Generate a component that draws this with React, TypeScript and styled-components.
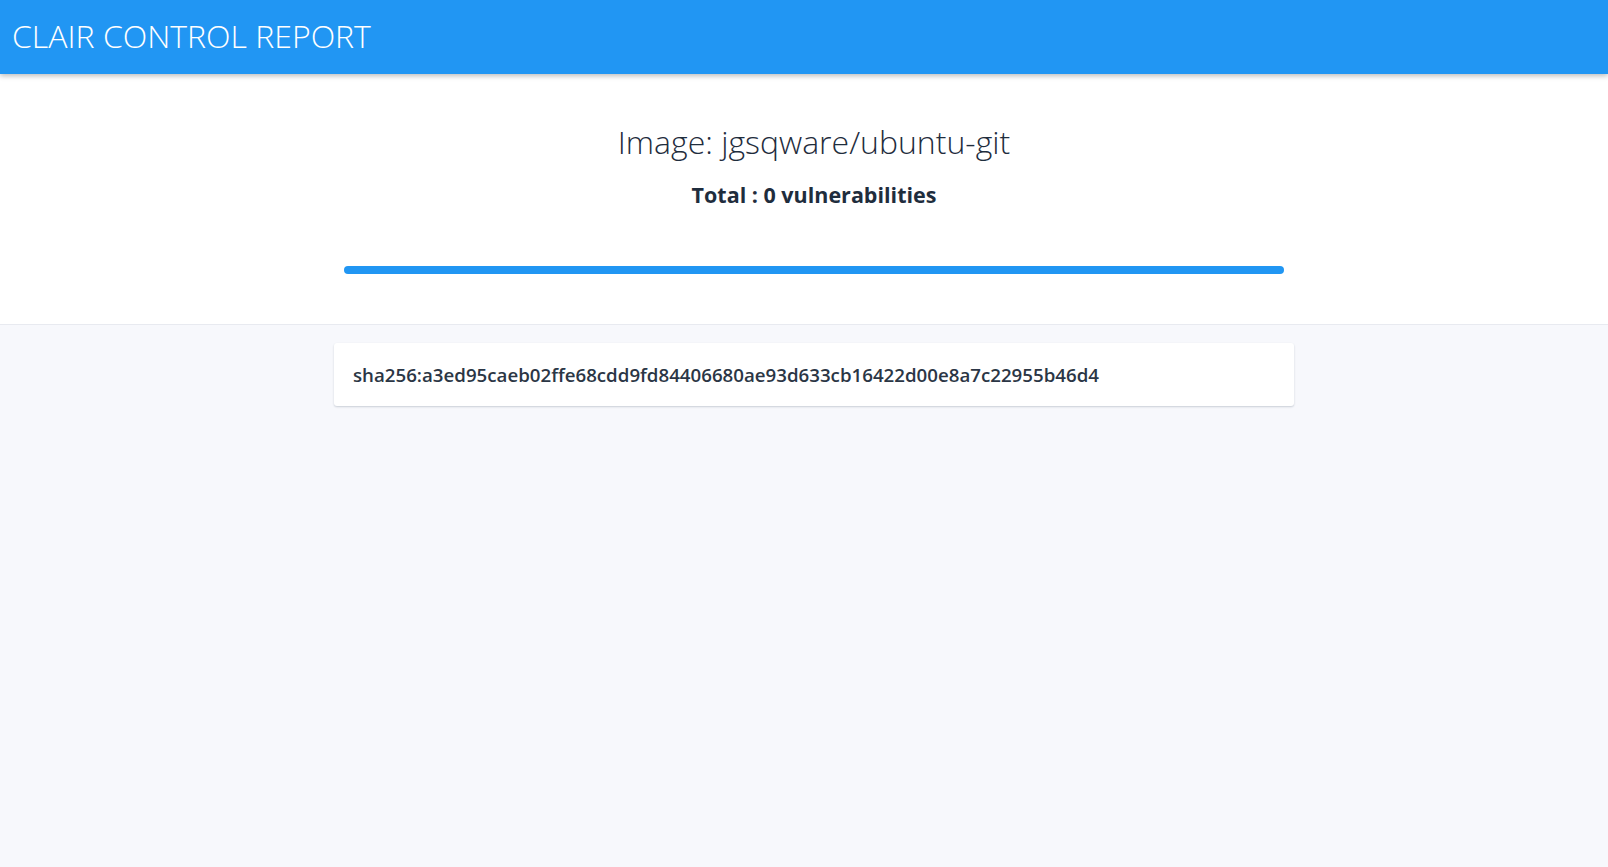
import React from "react";
import styled, { createGlobalStyle } from "styled-components";

const GlobalStyle = createGlobalStyle`
  html, body {
    margin: 0;
    padding: 0;
    height: 100%;
    background: #f7f8fc;
    font-family: "Open Sans", "Liberation Sans", sans-serif;
  }
  #root {
    min-height: 100%;
  }
  * { box-sizing: border-box; }
`;

const Page = styled.div`
  min-height: 100vh;
  display: flex;
  flex-direction: column;
  background: #f7f8fc;
`;

const Header = styled.header`
  height: 74px;
  background: #2196f3;
  display: flex;
  align-items: center;
  padding-left: 12px;
  box-shadow: 0 2px 5px rgba(0, 0, 0, 0.26);
  position: relative;
  z-index: 1;
`;

const Brand = styled.h1`
  margin: 0 0 2px;
  font-size: 32px;
  font-weight: 300;
  color: #ffffff;
  letter-spacing: 0;
  line-height: 1;
`;

const Summary = styled.section`
  background: #ffffff;
  border-bottom: 1px solid #e8eaf0;
  height: 251px;
  display: flex;
  flex-direction: column;
  align-items: center;
  padding: 48px 0 0 20px;
`;

const ImageTitle = styled.h2`
  margin: 0;
  font-size: 32px;
  font-weight: 300;
  line-height: 40px;
  color: #1f2d3d;
`;

const Total = styled.div`
  margin-top: 20px;
  font-size: 21.5px;
  font-weight: 700;
  line-height: 26px;
  color: #1f2d3d;
`;

const Bar = styled.div`
  margin-top: 58px;
  width: 940px;
  height: 8px;
  border-radius: 4px;
  background: #2196f3;
`;

const Content = styled.main`
  flex: 1;
  display: flex;
  flex-direction: column;
  align-items: center;
  padding: 18px 0 0 20px;
`;

const LayerCard = styled.div`
  width: 960px;
  height: 63px;
  background: #ffffff;
  border-radius: 3px;
  box-shadow: 0 1px 2px rgba(40, 60, 80, 0.22);
  display: flex;
  align-items: center;
  padding: 0 19px;
`;

const Digest = styled.span`
  font-size: 18.7px;
  font-weight: 600;
  color: #2b3645;
`;

export default function App() {
  return (
    <>
      <GlobalStyle />
      <Page>
        <Header>
          <Brand>CLAIR CONTROL REPORT</Brand>
        </Header>
        <Summary>
          <ImageTitle>Image: jgsqware/ubuntu-git</ImageTitle>
          <Total>Total : 0 vulnerabilities</Total>
          <Bar />
        </Summary>
        <Content>
          <LayerCard>
            <Digest>sha256:a3ed95caeb02ffe68cdd9fd84406680ae93d633cb16422d00e8a7c22955b46d4</Digest>
          </LayerCard>
        </Content>
      </Page>
    </>
  );
}
